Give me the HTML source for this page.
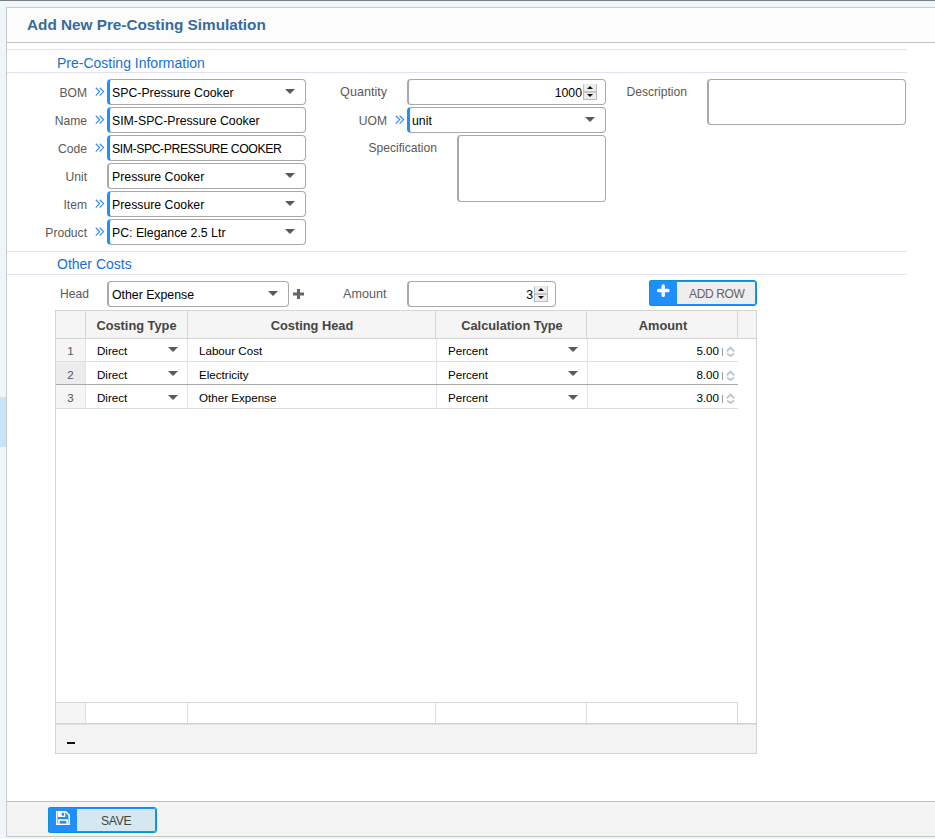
<!DOCTYPE html>
<html><head><meta charset="utf-8">
<style>
*{box-sizing:border-box;margin:0;padding:0}
html,body{width:935px;height:839px;overflow:hidden}
body{background:#eef6f9;font-family:"Liberation Sans",sans-serif;position:relative;color:#000}
.a{position:absolute}
.topline{left:0;top:0;width:935px;height:1px;background:#7e7e7e}
.sidetab{left:0;top:397px;width:6px;height:50px;background:#c8e4f8}
.panel{left:6px;top:7px;width:940px;height:830px;background:#fff;border:1px solid #cacaca}
.hdr{left:7px;top:8px;width:930px;height:35px;background:#fcfcfc;border-bottom:1px solid #c2c2c2}
.title{left:27px;top:16px;font-size:15.3px;font-weight:bold;color:#386aa0;white-space:nowrap;line-height:18px}
.sline{left:7px;width:900px;height:1px;background:#e1e1f0}
.stitle{font-size:14px;color:#1670d8;white-space:nowrap;line-height:16px}
.lbl{font-size:12.1px;color:#595959;white-space:nowrap;line-height:14px;text-align:right}
.box{border:1px solid #a9a9a9;border-left-width:2px;border-radius:4px;background:#fff;height:26px}
.req{border-left:3px solid #1f8ffa}
.txt{font-size:12.3px;color:#000;white-space:nowrap;line-height:14px}
.tri{width:0;height:0;border-left:5px solid transparent;border-right:5px solid transparent;border-top:5px solid #5a5a5a}
.foot{left:7px;top:801px;width:930px;height:36px;background:#f4f4f4;border-top:1px solid #bdbdbd;border-bottom:1px solid #c4c4c4}
.spin{width:14px;height:16px;background:#ececec;border:1px solid #bdbdbd;border-top-color:#e8e8e8}
.spin i{position:absolute;left:3px;width:0;height:0;border-left:3px solid transparent;border-right:3px solid transparent}
.th{font-size:12.8px;font-weight:bold;color:#444;white-space:nowrap;line-height:15px;text-align:center}
.td{font-size:11.6px;color:#000;white-space:nowrap;line-height:14px}
.tn{font-size:11.6px;color:#555;white-space:nowrap;line-height:14px;text-align:center}
.btn{border:1px solid #0a92d0;box-shadow:inset 0 0 0 1px #1f8ffd;border-radius:3px;background:#eee}
.btxt{font-size:11.5px;color:#555;white-space:nowrap;line-height:14px}
</style></head><body>
<div class="a topline"></div>
<div class="a sidetab"></div>
<div class="a panel"></div>
<div class="a hdr"></div>
<div class="a title">Add New Pre-Costing Simulation</div>
<div class="a sline" style="top:49px"></div>
<div class="a stitle" style="left:57px;top:55px">Pre-Costing Information</div>
<div class="a sline" style="top:72px"></div>

<div class="a lbl" style="right:848px;top:86px">BOM</div>
<svg class="a" style="left:95px;top:87px" width="10" height="10" viewBox="0 0 10 10"><path d="M0.8 0.8 L4.6 4.6 L0.8 8.6 M4.6 0.8 L8.6 4.6 L4.6 8.6" fill="none" stroke="#3a8ef5" stroke-width="1.25"/></svg>
<div class="a box req" style="left:107px;top:79px;width:199px;height:26px;"></div>
<div class="a txt" style="left:112px;top:86px;">SPC-Pressure Cooker</div>
<div class="a tri" style="left:285px;top:89px;border-top-color:#5a5a5a"></div>
<div class="a lbl" style="right:848px;top:114px">Name</div>
<svg class="a" style="left:95px;top:115px" width="10" height="10" viewBox="0 0 10 10"><path d="M0.8 0.8 L4.6 4.6 L0.8 8.6 M4.6 0.8 L8.6 4.6 L4.6 8.6" fill="none" stroke="#3a8ef5" stroke-width="1.25"/></svg>
<div class="a box req" style="left:107px;top:107px;width:199px;height:26px;"></div>
<div class="a txt" style="left:112px;top:114px;">SIM-SPC-Pressure Cooker</div>
<div class="a lbl" style="right:848px;top:142px">Code</div>
<svg class="a" style="left:95px;top:143px" width="10" height="10" viewBox="0 0 10 10"><path d="M0.8 0.8 L4.6 4.6 L0.8 8.6 M4.6 0.8 L8.6 4.6 L4.6 8.6" fill="none" stroke="#3a8ef5" stroke-width="1.25"/></svg>
<div class="a box req" style="left:107px;top:135px;width:199px;height:26px;"></div>
<div class="a txt" style="left:112px;top:142px;letter-spacing:-0.45px">SIM-SPC-PRESSURE COOKER</div>
<div class="a lbl" style="right:848px;top:170px">Unit</div>
<div class="a box" style="left:107px;top:163px;width:199px;height:26px;"></div>
<div class="a txt" style="left:112px;top:170px;">Pressure Cooker</div>
<div class="a tri" style="left:285px;top:173px;border-top-color:#5a5a5a"></div>
<div class="a lbl" style="right:848px;top:198px">Item</div>
<svg class="a" style="left:95px;top:199px" width="10" height="10" viewBox="0 0 10 10"><path d="M0.8 0.8 L4.6 4.6 L0.8 8.6 M4.6 0.8 L8.6 4.6 L4.6 8.6" fill="none" stroke="#3a8ef5" stroke-width="1.25"/></svg>
<div class="a box req" style="left:107px;top:191px;width:199px;height:26px;"></div>
<div class="a txt" style="left:112px;top:198px;">Pressure Cooker</div>
<div class="a tri" style="left:285px;top:201px;border-top-color:#5a5a5a"></div>
<div class="a lbl" style="right:848px;top:226px">Product</div>
<svg class="a" style="left:95px;top:227px" width="10" height="10" viewBox="0 0 10 10"><path d="M0.8 0.8 L4.6 4.6 L0.8 8.6 M4.6 0.8 L8.6 4.6 L4.6 8.6" fill="none" stroke="#3a8ef5" stroke-width="1.25"/></svg>
<div class="a box req" style="left:107px;top:219px;width:199px;height:26px;"></div>
<div class="a txt" style="left:112px;top:226px;">PC: Elegance 2.5 Ltr</div>
<div class="a tri" style="left:285px;top:229px;border-top-color:#5a5a5a"></div>
<div class="a lbl" style="font-size:12.6px;right:548px;top:85px">Quantity</div>
<div class="a box" style="left:407px;top:79px;width:199px;height:26px;"></div>
<div class="a txt" style="left:0px;top:86px;right:353px;left:auto">1000</div>
<div class="a spin" style="left:583px;top:84px"><b style="position:absolute;left:0;top:6px;width:12px;height:1.5px;background:#c6c6c6"></b><i style="top:1px;border-bottom:3px solid #111"></i><i style="top:9px;border-top:3px solid #111"></i></div>
<div class="a lbl" style="right:548px;top:114px">UOM</div>
<svg class="a" style="left:395px;top:115px" width="10" height="10" viewBox="0 0 10 10"><path d="M0.8 0.8 L4.6 4.6 L0.8 8.6 M4.6 0.8 L8.6 4.6 L4.6 8.6" fill="none" stroke="#3a8ef5" stroke-width="1.25"/></svg>
<div class="a box req" style="left:407px;top:107px;width:199px;height:26px;"></div>
<div class="a txt" style="left:412px;top:114px;">unit</div>
<div class="a tri" style="left:585px;top:117px;border-top-color:#5a5a5a"></div>
<div class="a lbl" style="right:498px;top:141px">Specification</div>
<div class="a box" style="left:457px;top:135px;width:149px;height:67px;"></div>
<div class="a lbl" style="right:248px;top:85px">Description</div>
<div class="a box" style="left:707px;top:79px;width:199px;height:46px;"></div>
<div class="a sline" style="top:251px"></div>
<div class="a stitle" style="left:57px;top:256px">Other Costs</div>
<div class="a sline" style="top:274px"></div>
<div class="a lbl" style="left:60px;top:287px;">Head</div>
<div class="a box" style="left:107px;top:281px;width:182px;height:26px;"></div>
<div class="a txt" style="left:112px;top:288px;">Other Expense</div>
<div class="a tri" style="left:268px;top:291px;border-top-color:#5a5a5a"></div>
<svg class="a" style="left:293px;top:289px" width="11" height="10" viewBox="0 0 11 10"><path d="M0 5 H11 M5.5 0 V10" stroke="#666" stroke-width="3"/></svg>
<div class="a lbl" style="left:343px;top:287px;font-size:12.6px">Amount</div>
<div class="a box" style="left:407px;top:281px;width:149px;height:26px;"></div>
<div class="a txt" style="left:0px;top:288px;right:402px;left:auto">3</div>
<div class="a spin" style="left:534px;top:286px"><b style="position:absolute;left:0;top:6px;width:12px;height:1.5px;background:#c6c6c6"></b><i style="top:1px;border-bottom:3px solid #111"></i><i style="top:9px;border-top:3px solid #111"></i></div>
<div class="a btn" style="left:649px;top:280px;width:108px;height:26px"></div>
<div class="a" style="left:649px;top:280px;width:28px;height:26px;background:#1f8ffd;border:1px solid #0a92d0;border-right:none;border-radius:3px 0 0 3px"></div>
<svg class="a" style="left:656px;top:284px" width="14" height="14" viewBox="0 0 14 14"><path d="M2.5 6.5 H12 M7.2 2 V11.4" stroke="#fff" stroke-width="3.4" stroke-linecap="round"/></svg>
<div class="a btxt" style="left:689px;top:287px;font-size:12px;letter-spacing:-0.35px;color:#636363">ADD ROW</div>
<div class="a" style="left:55px;top:310px;width:702px;height:444px;border:1px solid #d4d4d4;background:#fff"></div>
<div class="a" style="left:56px;top:311px;width:700px;height:28px;background:#f5f5f5;border-bottom:1px solid #d4d4d4"></div>
<div class="a" style="left:85px;top:311px;width:1px;height:27px;background:#d6d6d6"></div>
<div class="a" style="left:187px;top:311px;width:1px;height:27px;background:#d6d6d6"></div>
<div class="a" style="left:435px;top:311px;width:1px;height:27px;background:#d6d6d6"></div>
<div class="a" style="left:586px;top:311px;width:1px;height:27px;background:#d6d6d6"></div>
<div class="a" style="left:737px;top:311px;width:1px;height:27px;background:#d6d6d6"></div>
<div class="a th" style="left:86px;top:318px;width:101px">Costing Type</div>
<div class="a th" style="left:188px;top:318px;width:248px">Costing Head</div>
<div class="a th" style="left:437px;top:318px;width:150px">Calculation Type</div>
<div class="a th" style="left:588px;top:318px;width:150px">Amount</div>
<div class="a" style="left:56px;top:339px;width:29px;height:22px;background:#f5f5f5"></div>
<div class="a" style="left:56px;top:361px;width:682px;height:1px;background:#dedede"></div>
<div class="a" style="left:85px;top:339px;width:1px;height:22px;background:#e4e4e4"></div>
<div class="a" style="left:187px;top:339px;width:1px;height:22px;background:#e4e4e4"></div>
<div class="a" style="left:436px;top:339px;width:1px;height:22px;background:#e4e4e4"></div>
<div class="a" style="left:587px;top:339px;width:1px;height:22px;background:#e4e4e4"></div>
<div class="a tn" style="left:56px;top:344px;width:29px">1</div>
<div class="a td" style="left:97px;top:344px;">Direct</div>
<div class="a tri" style="left:168px;top:347px;border-top-color:#5a5a5a"></div>
<div class="a td" style="left:199px;top:344px;">Labour Cost</div>
<div class="a td" style="left:448px;top:344px;">Percent</div>
<div class="a tri" style="left:568px;top:347px;border-top-color:#5a5a5a"></div>
<div class="a td" style="right:216px;top:344px">5.00</div>
<div class="a" style="left:722px;top:348px;width:1px;height:8px;background:#9a9a9a"></div>
<svg class="a" style="left:726px;top:346px" width="9" height="11" viewBox="0 0 9 11"><path d="M0.8 5.3 L4.5 1.6 L8.2 5.3 M1 7.5 L4.5 10 L8 7.5" fill="none" stroke="#b7c7d2" stroke-width="1.9"/></svg>
<div class="a" style="left:56px;top:362px;width:29px;height:22px;background:#ececec"></div>
<div class="a" style="left:56px;top:384px;width:682px;height:1px;background:#a8a8a8"></div>
<div class="a" style="left:85px;top:362px;width:1px;height:22px;background:#e4e4e4"></div>
<div class="a" style="left:187px;top:362px;width:1px;height:22px;background:#e4e4e4"></div>
<div class="a" style="left:436px;top:362px;width:1px;height:22px;background:#e4e4e4"></div>
<div class="a" style="left:587px;top:362px;width:1px;height:22px;background:#e4e4e4"></div>
<div class="a tn" style="left:56px;top:368px;width:29px">2</div>
<div class="a td" style="left:97px;top:368px;">Direct</div>
<div class="a tri" style="left:168px;top:371px;border-top-color:#5a5a5a"></div>
<div class="a td" style="left:199px;top:368px;">Electricity</div>
<div class="a td" style="left:448px;top:368px;">Percent</div>
<div class="a tri" style="left:568px;top:371px;border-top-color:#5a5a5a"></div>
<div class="a td" style="right:216px;top:368px">8.00</div>
<div class="a" style="left:722px;top:372px;width:1px;height:8px;background:#9a9a9a"></div>
<svg class="a" style="left:726px;top:370px" width="9" height="11" viewBox="0 0 9 11"><path d="M0.8 5.3 L4.5 1.6 L8.2 5.3 M1 7.5 L4.5 10 L8 7.5" fill="none" stroke="#b7c7d2" stroke-width="1.9"/></svg>
<div class="a" style="left:56px;top:385px;width:29px;height:23px;background:#f5f5f5"></div>
<div class="a" style="left:56px;top:408px;width:682px;height:1px;background:#dedede"></div>
<div class="a" style="left:85px;top:385px;width:1px;height:23px;background:#e4e4e4"></div>
<div class="a" style="left:187px;top:385px;width:1px;height:23px;background:#e4e4e4"></div>
<div class="a" style="left:436px;top:385px;width:1px;height:23px;background:#e4e4e4"></div>
<div class="a" style="left:587px;top:385px;width:1px;height:23px;background:#e4e4e4"></div>
<div class="a tn" style="left:56px;top:391px;width:29px">3</div>
<div class="a td" style="left:97px;top:391px;">Direct</div>
<div class="a tri" style="left:168px;top:395px;border-top-color:#5a5a5a"></div>
<div class="a td" style="left:199px;top:391px;">Other Expense</div>
<div class="a td" style="left:448px;top:391px;">Percent</div>
<div class="a tri" style="left:568px;top:395px;border-top-color:#5a5a5a"></div>
<div class="a td" style="right:216px;top:391px">3.00</div>
<div class="a" style="left:722px;top:395px;width:1px;height:8px;background:#9a9a9a"></div>
<svg class="a" style="left:726px;top:393px" width="9" height="11" viewBox="0 0 9 11"><path d="M0.8 5.3 L4.5 1.6 L8.2 5.3 M1 7.5 L4.5 10 L8 7.5" fill="none" stroke="#b7c7d2" stroke-width="1.9"/></svg>
<div class="a" style="left:56px;top:702px;width:682px;height:22px;border-top:1px solid #d8d8d8;border-right:1px solid #d8d8d8;background:#fff"></div>
<div class="a" style="left:56px;top:703px;width:29px;height:21px;background:#f5f5f5"></div>
<div class="a" style="left:85px;top:703px;width:1px;height:20px;background:#dcdcdc"></div>
<div class="a" style="left:187px;top:703px;width:1px;height:20px;background:#dcdcdc"></div>
<div class="a" style="left:435px;top:703px;width:1px;height:20px;background:#dcdcdc"></div>
<div class="a" style="left:586px;top:703px;width:1px;height:20px;background:#dcdcdc"></div>
<div class="a" style="left:56px;top:723px;width:700px;height:30px;background:#f4f4f4;border-top:1px solid #d0d0d0;box-shadow:inset 0 1px 0 #e2e2e2"></div>
<div class="a" style="left:67px;top:742px;width:8px;height:2px;background:#111"></div>
<div class="a foot"></div>
<div class="a btn" style="left:48px;top:807px;width:109px;height:26px;background:#d5e8f0"></div>
<div class="a" style="left:48px;top:807px;width:29px;height:26px;background:#1f8ffd;border:1px solid #0a92d0;border-right:none;border-radius:3px 0 0 3px"></div>
<svg class="a" style="left:56px;top:811px" width="14" height="14" viewBox="0 0 14 14"><path d="M0 0 H10 L14 4 V14 H0 Z" fill="#fff"/><path d="M1.5 1.5 H9.4 L12.5 4.6 V12.5 H1.5 Z" fill="#1f8ffd"/><rect x="2" y="0.2" width="7.3" height="5.8" fill="#fff"/><rect x="5.7" y="1.8" width="2.3" height="2.9" fill="#1f8ffd"/><rect x="2.2" y="8.3" width="9.8" height="4.5" fill="#fff"/><rect x="3.7" y="9.8" width="6.6" height="2.8" fill="#1f8ffd"/></svg>
<div class="a btxt" style="left:101px;top:814px;font-size:12.2px;letter-spacing:-0.35px;color:#444">SAVE</div>
</body></html>
